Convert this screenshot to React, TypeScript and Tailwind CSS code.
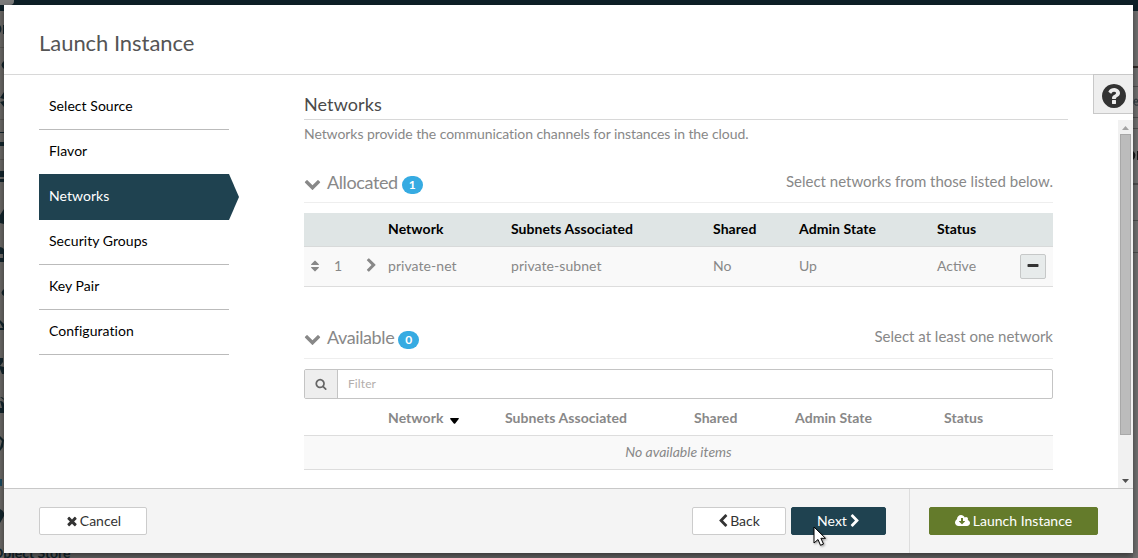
import type { ReactNode } from "react";

const GLYPHS = {
  chevronDown:
    "M1683 808l-742 741q-19 19-45 19t-45-19l-742-741q-19-19-19-45.5t19-45.5l166-165q19-19 45-19t45 19l531 531 531-531q19-19 45-19t45 19l166 165q19 19 19 45.5t-19 45.5z",
  chevronRight:
    "M1363 877l-742 742q-19 19-45 19t-45-19l-166-166q-19-19-19-45t19-45l531-531-531-531q-19-19-19-45t19-45l166-166q19-19 45-19t45 19l742 742q19 19 19 45t-19 45z",
  chevronLeft:
    "M1427 301l-531 531 531 531q19 19 19 45t-19 45l-166 166q-19 19-45 19t-45-19l-742-742q-19-19-19-45t19-45l742-742q19-19 45-19t45 19l166 166q19 19 19 45t-19 45z",
  question:
    "M1024 1376v-192q0-14-9-23t-23-9h-192q-14 0-23 9t-9 23v192q0 14 9 23t23 9h192q14 0 23-9t9-23zm256-672q0-88-55.5-163t-138.5-116-170-41q-243 0-371 213-15 24 8 42l132 100q7 6 19 6 16 0 25-12 53-68 86-92 34-24 86-24 48 0 85.5 26t37.5 59q0 38-20 61t-68 45q-63 28-115.5 86.5t-52.5 125.5v36q0 14 9 23t23 9h192q14 0 23-9t9-23q0-19 21.5-49.5t54.5-49.5q32-18 49-28.5t46-35 44.5-48 28-60.5 12.5-81zm384 192q0 209-103 385.5t-279.5 279.5-385.5 103-385.5-103-279.5-279.5-103-385.5 103-385.5 279.5-279.5 385.5-103 385.5 103 279.5 279.5 103 385.5z",
  times:
    "M1490 1322q0 40-28 68l-136 136q-28 28-68 28t-68-28l-294-294-294 294q-28 28-68 28t-68-28l-136-136q-28-28-28-68t28-68l294-294-294-294q-28-28-28-68t28-68l136-136q28-28 68-28t68 28l294 294 294-294q28-28 68-28t68 28l136 136q28 28 28 68t-28 68l-294 294 294 294q28 28 28 68z",
  minus:
    "M1600 736v192q0 40-28 68t-68 28h-1216q-40 0-68-28t-28-68v-192q0-40 28-68t68-28h1216q40 0 68 28t28 68z",
  search:
    "M1216 832q0-185-131.5-316.5t-316.5-131.5-316.5 131.5-131.5 316.5 131.5 316.5 316.5 131.5 316.5-131.5 131.5-316.5zm512 832q0 52-38 90t-90 38q-54 0-90-38l-343-342q-179 124-399 124-143 0-273.5-55.5t-225-150-150-225-55.5-273.5 55.5-273.5 150-225 225-150 273.5-55.5 273.5 55.5 225 150 150 225 55.5 273.5q0 220-124 399l343 343q37 37 37 90z",
  sort: "M1408 1088q0 26-19 45l-448 448q-19 19-45 19t-45-19l-448-448q-19-19-19-45t19-45 45-19h896q26 0 45 19t19 45zm0-384q0 26-19 45t-45 19h-896q-26 0-45-19t-19-45 19-45l448-448q19-19 45-19t45 19l448 448q19 19 19 45z",
  cloud:
    "M1280 928q0-14-9-23t-23-9h-224v-352q0-13-9.5-22.5t-22.5-9.5h-192q-13 0-22.5 9.5t-9.5 22.5v352h-224q-13 0-22.5 9.5t-9.5 22.5q0 14 9 23l352 352q9 9 23 9t23-9l351-351q10-12 10-24zm640 224q0 159-112.5 271.5t-271.5 112.5h-1088q-185 0-316.5-131.5t-131.5-316.5q0-130 70-240t188-165q-2-30-2-43 0-212 150-362t362-150q156 0 285.5 87t188.5 231q71-62 166-62 106 0 181 75t75 181q0 76-41 138 130 31 213.5 135.5t83.5 238.5z",
};

function Icon({ name, className, box = "0 0 1792 1792" }: { name: keyof typeof GLYPHS; className: string; box?: string }) {
  return (
    <svg viewBox={box} className={`shrink-0 ${className}`} fill="currentColor" aria-hidden="true">
      <path d={GLYPHS[name]} />
    </svg>
  );
}

const STEPS = ["Select Source", "Flavor", "Networks", "Security Groups", "Key Pair", "Configuration"];

function Steps() {
  return (
    <nav className="ml-[35px] mt-[10px] w-[190px] shrink-0 text-[14px] leading-5 tracking-[0.05px] text-black">
      {STEPS.map((step) =>
        step === "Networks" ? (
          <div key={step} className="-mt-px flex h-[46px] w-[200px] items-start bg-[#1f4250] pl-[10px] pt-[12px] text-white [clip-path:polygon(0_0,190px_0,100%_50%,190px_100%,0_100%)]">
            {step}
          </div>
        ) : (
          <div key={step} className="h-[45px] border-b border-[#bbb] pl-[10px] pt-[11px]">
            {step}
          </div>
        )
      )}
    </nav>
  );
}

function SectionTitle({ title, count, hint }: { title: string; count: number; hint: string }) {
  return (
    <div className="flex w-[749px] items-start">
      <Icon name="chevronDown" className="mt-[7px] size-[17px]" />
      <span className="ml-[6px] mt-px text-[18px] leading-[26px] tracking-[-0.4px]">{title}</span>
      <span className="ml-1 mt-2 flex h-[18px] items-center rounded-[9px] bg-[#36abe2] px-[7px] text-[12px] font-bold leading-none text-white">
        {count}
      </span>
      <span className="ml-auto mt-px text-[15px] leading-6">{hint}</span>
    </div>
  );
}

function Cells({ items, columns }: { items: ReactNode[]; columns: string }) {
  return (
    <div className={`grid grow items-center pb-[2px] ${columns}`}>
      {items.map((item, i) => (
        <div key={i} className="whitespace-nowrap">{item}</div>
      ))}
    </div>
  );
}

function Content() {
  const allocated = "grid-cols-[84px_123px_202px_86px_138px_83px]";
  const available = "grid-cols-[84px_117px_189px_101px_149px_1fr]";
  return (
    <section className="ml-[75px] w-[764px] shrink-0 text-[14px] leading-5 text-[#888]">
      <h2 className="flex h-[45px] items-end border-b border-[#d8d8d8] pb-[3px] text-[18px] leading-6 tracking-[0.1px] text-[#4a4a4a]">
        Networks
      </h2>
      <p className="mt-1 h-5 tracking-[-0.07px]">Networks provide the communication channels for instances in the cloud.</p>
      <div className="mt-[24px]">
        <div className="h-[35px] w-[749px] border-b border-[#eee]">
          <SectionTitle title="Allocated" count={1} hint="Select networks from those listed below." />
        </div>
        <div className="mt-[10px] w-[749px]">
          <div className="flex h-[34px] border-b border-[#d8dada] bg-[#dfe5e5] font-bold tracking-[0.06px] text-black">
            <Cells columns={allocated} items={["", "Network", "Subnets Associated", "Shared", "Admin State", "Status"]} />
          </div>
          <div className="flex h-[40px] items-stretch border-b border-[#ddd] bg-[#f9f9f9]">
            <Cells
              columns={allocated}
              items={[
                <div className="flex items-center pl-1">
                  <Icon name="sort" className="size-[14px]" />
                  <span className="ml-3 w-[30px]">1</span>
                  <Icon name="chevronRight" className="size-[15px]" />
                </div>,
                <span className="tracking-[0.06px]">private-net</span>,
                <span className="tracking-[0.06px]">private-subnet</span>,
                "No",
                "Up",
                "Active",
              ]}
            />
            <button className="mr-[7px] mt-[7px] flex h-[25px] w-[26px] items-center justify-center rounded-[2px] border border-[#c6c8c8] bg-[#e7ebeb] pb-px text-[#333]">
              <Icon name="minus" className="size-[14px]" />
            </button>
          </div>
        </div>
      </div>
      <div className="mt-[36px]">
        <div className="h-[36px] w-[749px] border-b border-[#eee]">
          <SectionTitle title="Available" count={0} hint="Select at least one network" />
        </div>
        <div className="mt-[10px] flex h-[30px] w-[749px] overflow-hidden rounded-[2px] border border-[#c4c4c4]">
          <span className="flex w-[33px] items-center justify-center border-r border-[#c4c4c4] bg-[#eee] text-[#666]">
            <Icon name="search" className="size-[12px]" />
          </span>
          <span className="pl-[10px] pt-[4px] text-[12px] leading-5 tracking-[0.1px] text-[#b3aeac]">Filter</span>
        </div>
        <div className="w-[749px]">
          <div className="flex h-[37px] border-b border-[#ddd] pt-[4px] font-bold tracking-[0.06px]">
            <Cells
              columns={available}
              items={[
                "",
                <span className="flex items-center">
                  Network
                  <svg viewBox="0 0 9 6" className="ml-[7px] mt-[6px] h-[6px] w-[9px] fill-black">
                    <path d="M.7 0h7.6q1.2.4.2 1.3L5.2 5.5q-.7.7-1.4 0L.4 1.3Q-.3.3.7 0z" />
                  </svg>
                </span>,
                "Subnets Associated",
                "Shared",
                "Admin State",
                "Status",
              ]}
            />
          </div>
          <div className="flex h-[34px] items-center justify-center border-b border-[#ddd] bg-[#f9f9f9] pb-[2px] italic">
            No available items
          </div>
        </div>
      </div>
    </section>
  );
}

function SideRail() {
  return (
    <aside className="ml-auto flex w-10 shrink-0 flex-col items-end">
      <div className="-mt-px flex h-[40px] w-10 items-center justify-center border border-r-0 border-[#c8c8c8] bg-[#eee] text-[#333]">
        <Icon name="question" className="mt-[3px] size-[28px]" />
      </div>
      <div className="mt-[6px] flex w-[15px] grow flex-col items-center bg-[#f1f1f1]">
        <svg viewBox="0 0 7 4" className="mt-[6px] h-[4px] w-[7px] fill-[#a3a3a3]"><path d="M3.5 0L7 4H0z" /></svg>
        <div className="mt-[4px] h-[301px] w-[11px] border border-[#a8a8a8] bg-[#bcbcbc]" />
        <svg viewBox="0 0 7 4" className="mt-auto mb-[5px] h-[4px] w-[7px] fill-[#505050]"><path d="M3.5 4L0 0h7z" /></svg>
      </div>
    </aside>
  );
}

function Footer() {
  const button = "flex h-7 items-center justify-center rounded-[2px] border text-[14px] leading-5";
  return (
    <footer className="flex h-[65px] shrink-0 border-t border-[#c8c8c8] bg-[#f4f4f4] pl-[35px] text-[#333]">
      <button className={`${button} mt-[18px] w-[108px] gap-px border-[#ccc] bg-white`}>
        <Icon name="times" className="size-[14px]" />
        Cancel
      </button>
      <button className={`${button} ml-auto mt-[18px] w-[94px] border-[#ccc] bg-white pr-[2px]`}>
        <Icon name="chevronLeft" className="size-[14px]" />
        Back
      </button>
      <button className={`${button} relative ml-[5px] mr-[23px] mt-[18px] w-[95px] gap-px border-[#1f4250] bg-[#1f4250] pl-[2px] text-white`}>
        Next
        <Icon name="chevronRight" className="size-[14px]" />
        <svg viewBox="0 0 14 21" className="absolute left-[21px] top-[18px] h-[21px] w-[14px] overflow-visible drop-shadow-[1px_1px_1px_rgba(0,0,0,0.4)]">
          <path d="M1 1v16l4-3.5 2.5 5.8 3-1.3-2.6-5.7h4.6z" fill="#fff" stroke="#000" strokeWidth="1" />
        </svg>
      </button>
      <div className="flex w-[224px] border-l border-[#ddd] pl-[19px]">
        <button className={`${button} mt-[18px] w-[169px] gap-[3px] border-[#647b2b] bg-[#647b2b] text-white`}>
          <Icon name="cloud" className="h-[14px] w-[15px]" box="0 0 1920 1792" />
          Launch Instance
        </button>
      </div>
    </footer>
  );
}

function Backdrop() {
  return (
    <div className="relative flex h-[558px] flex-col overflow-hidden">
      <div className="flex h-[11px] shrink-0 bg-[#0e2028]">
        <div className="h-[5px] w-[14px] rounded-br-[4px] bg-[#7c7c7c]" />
      </div>
      <div className="flex grow justify-between">
        <svg viewBox="0 11 4 547" className="h-[547px] w-1 overflow-hidden" fill="#14262d">
          <path d="M0 11h4v547H0z" fill="#6c6a67" />
          <path d="M0 47h4v1H0zM0 119h4v1H0zM0 159h4v1H0z" fill="#5a5855" />
          <path d="M0 25q3 4 0 8zM3 25h1v9H3zM4 61q-5 4 0 8zM4 92L0 98l4 1zM0 102l4-1v6zM0 132h4v1H0zM0 142h4v4H0zM0 171h4v6H0zM0 179h4v3H0zM4 209l-4 6v8l4 1zM0 247q4 1 4 3v12H0v-4h3v-4H0zM4 289q-5 4 0 7zM0 320l4 4v6H0v-2h3l-3-5zM0 358h3v4l-3 4 4 1v7H2l-2-5zM0 397q4 0 4 3zM0 401q4 0 4 4v8H0v-5h2zM0 436l4 4-1 7-3 4v-3l2-7-2-2zM0 509q5 2 4 7l-4 7z" />
          <path d="M0 479h2v7H0z" fill="#1d4b60" />
        </svg>
        <svg viewBox="0 11 5 547" className="h-[547px] w-[5px] overflow-hidden" fill="#4f4f4f">
          <path d="M0 11h5v547H0z" fill="#727272" />
          <path d="M0 86h5v1H0zM0 117h5v1H0zM0 128h5v1H0zM0 183h5v2H0zM0 220h5v1H0zM0 252h5v1H0z" />
          <path d="M0 66h5v2H0z" fill="#302a27" />
          <path d="M1 102h4q0-3-2-3t-2 3q0 4 4 3" fill="none" stroke="#27323a" />
          <path d="M0 151q5 4 0 9zM4 151h1v9H4z" fill="#181818" />
        </svg>
      </div>
      <div className="absolute left-[-8px] top-[543px] text-[14px] font-bold leading-5 text-[#14262d]">Object Store</div>
    </div>
  );
}

export default function App() {
  return (
    <div className="relative h-[558px] w-[1138px] overflow-hidden bg-[#686868] font-['Lato',sans-serif]">
      <Backdrop />
      <main className="absolute left-1 top-[5px] flex h-[548px] w-[1129px] flex-col bg-white shadow-[0_3px_7px_rgba(0,0,0,0.5)]">
        <header className="flex h-[70px] shrink-0 items-center border-b border-[#d8d8d8] pl-[35px] pt-[7px] text-[22px] leading-8 tracking-[-0.04px] text-[#555]">
          Launch Instance
        </header>
        <div className="flex min-h-0 grow">
          <Steps />
          <Content />
          <SideRail />
        </div>
        <Footer />
      </main>
    </div>
  );
}
